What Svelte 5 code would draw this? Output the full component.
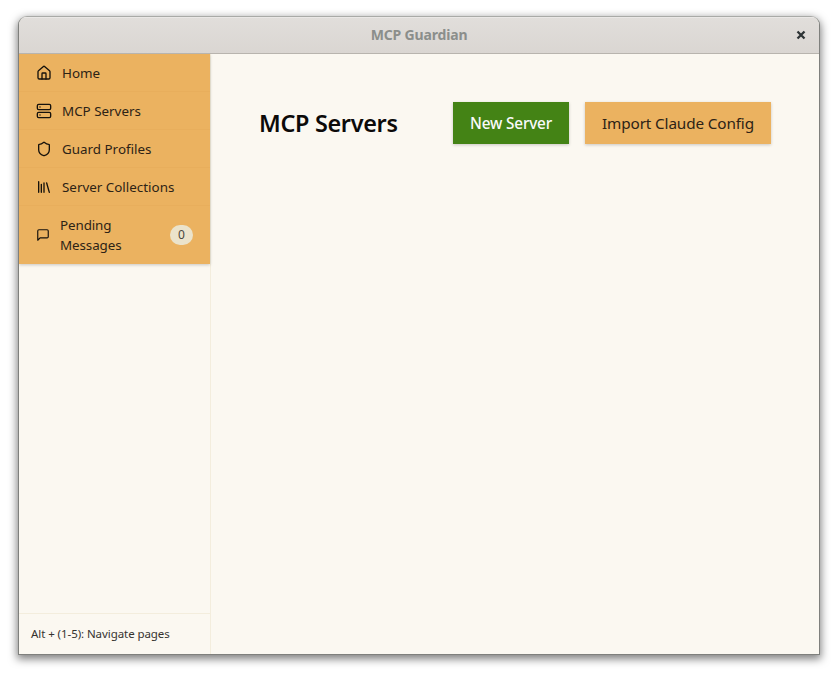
<script>
  const items = [
    { label: 'Home', icon: 'home' },
    { label: 'MCP Servers', icon: 'server' },
    { label: 'Guard Profiles', icon: 'shield' },
    { label: 'Server Collections', icon: 'library' },
    { label: 'Pending Messages', icon: 'message', count: 0 }
  ];
</script>

<div class="desktop">
  <div class="window">
    <header class="titlebar">
      <span class="title">MCP Guardian</span>
      <button class="close" aria-label="Close">
        <svg width="10" height="10" viewBox="0 0 10 10"><path d="M1.5 1.5l7 7M8.5 1.5l-7 7" stroke="#2e3436" stroke-width="2.3" /></svg>
      </button>
    </header>
    <div class="body">
      <aside>
        <nav>
          {#each items as item}
            <button class="item" class:pending={item.icon === 'message'}>
              <svg class="icon" viewBox="0 0 24 24">
                {#if item.icon === 'home'}
                  <path d="M15 21v-8a1 1 0 0 0-1-1h-4a1 1 0 0 0-1 1v8" />
                  <path d="M3 10a2 2 0 0 1 .709-1.528l7-5.999a2 2 0 0 1 2.582 0l7 5.999A2 2 0 0 1 21 10v9a2 2 0 0 1-2 2H5a2 2 0 0 1-2-2z" />
                {:else if item.icon === 'server'}
                  <rect width="20" height="8" x="2" y="2" rx="2" />
                  <rect width="20" height="8" x="2" y="14" rx="2" />
                  <path d="M6 6h.01M6 18h.01" />
                {:else if item.icon === 'shield'}
                  <path d="M20 13c0 5-3.5 7.5-7.66 8.95a1 1 0 0 1-.67-.01C7.5 20.5 4 18 4 13V6a1 1 0 0 1 1-1c2 0 4.5-1.2 6.24-2.72a1.17 1.17 0 0 1 1.52 0C14.51 3.81 17 5 19 5a1 1 0 0 1 1 1z" />
                {:else if item.icon === 'library'}
                  <path d="m16 6 4 14M12 6v14M8 8v12M4 4v16" />
                {:else}
                  <path d="M21 15a2 2 0 0 1-2 2H7l-4 4V5a2 2 0 0 1 2-2h14a2 2 0 0 1 2 2z" />
                {/if}
              </svg>
              <span class="label">{item.label}</span>
              {#if item.count !== undefined}<span class="badge">{item.count}</span>{/if}
            </button>
          {/each}
        </nav>
        <footer><span>Alt + (1-5): Navigate pages</span></footer>
      </aside>
      <main>
        <div class="heading">
          <h1>MCP Servers</h1>
          <div class="actions">
            <button class="primary">New Server</button>
            <button class="secondary">Import Claude Config</button>
          </div>
        </div>
      </main>
    </div>
  </div>
</div>

<style>
  :global(body) { background: #fff; }
  * { box-sizing: border-box; }
  button { border: 0; margin: 0; padding: 0; font: inherit; color: inherit; background: none; }
  .desktop {
    width: 837px; height: 674px; padding: 16px 17px 19px 18px; overflow: hidden;
    background: #fff; font-family: "Noto Sans", sans-serif; color: #0c0a09;
  }
  .window {
    height: 639px; display: flex; flex-direction: column; overflow: hidden;
    border: 1px solid #7f807d; border-top-color: #a9aaa7; border-radius: 9px 9px 0 0;
    background: #fbf8f1;
    box-shadow: 0 3px 9px 1px rgba(0, 0, 0, 0.5);
  }
  .titlebar {
    flex: 0 0 37px; display: flex; align-items: center; justify-content: center; position: relative;
    background: linear-gradient(#e1dedb, #dad6d2); border-bottom: 1px solid #b8b4ae;
    box-shadow: inset 0 1px #eae8e6;
  }
  .title { font-size: 14px; font-weight: 700; color: #8b8e8b; line-height: 20px; letter-spacing: -0.16px; }
  .close { position: absolute; right: 13px; top: 13px; display: flex; }
  .body { flex: 1; display: flex; min-height: 0; }
  aside {
    flex: 0 0 192px; border-right: 1px solid #f3eddd; display: flex; flex-direction: column;
    justify-content: space-between;
  }
  nav { background: #ebb260; box-shadow: 0 1px 3px rgba(0, 0, 0, 0.2); }
  .item {
    display: flex; align-items: center; width: 100%; height: 38px; padding: 0 17px; gap: 10px;
    border-bottom: 1px solid #e8ae5c; text-align: left; font-size: 13.4px; line-height: 20px; color: #2d2316;
    font-weight: 400;
  }
  .item.pending { height: 58px; gap: 10px; border: 0; }
  .icon {
    flex: 0 0 16px; width: 16px; height: 16px; fill: none; stroke: #16120c; stroke-width: 2;
    stroke-linecap: round; stroke-linejoin: round;
  }
  .pending .icon { flex-basis: 14px; width: 14px; height: 14px; }
  .label { flex: 1; white-space: nowrap; }
  .pending .label { white-space: normal; letter-spacing: -0.1px; }
  .badge {
    width: 23px; height: 20px; border-radius: 10px; background: #ebe3cb; color: #4a4740;
    font-size: 12px; line-height: 20px; text-align: center;
  }
  footer {
    height: 41px; border-top: 1px solid #f3eddd; padding: 12px; font-size: 11.5px; line-height: 16px;
    color: #35332f; white-space: nowrap; letter-spacing: -0.07px;
  }
  main { flex: 1; padding: 48px; }
  .heading { display: flex; align-items: center; justify-content: space-between; height: 42px; }
  h1 { margin: 0; font-size: 23.4px; line-height: 32px; font-weight: 600; white-space: nowrap; letter-spacing: -0.3px; }
  .actions { display: flex; gap: 16px; }
  .actions button { height: 42px; white-space: nowrap; box-shadow: 0 1px 3px rgba(0, 0, 0, 0.2); }
  .actions .primary { width: 116px; background: #448315; color: #f9fafb; font-size: 15.3px; font-weight: 500; letter-spacing: -0.15px; }
  .actions .secondary { width: 186px; background: #ebb260; color: #2d2316; font-size: 15.3px; letter-spacing: -0.14px; }
</style>
